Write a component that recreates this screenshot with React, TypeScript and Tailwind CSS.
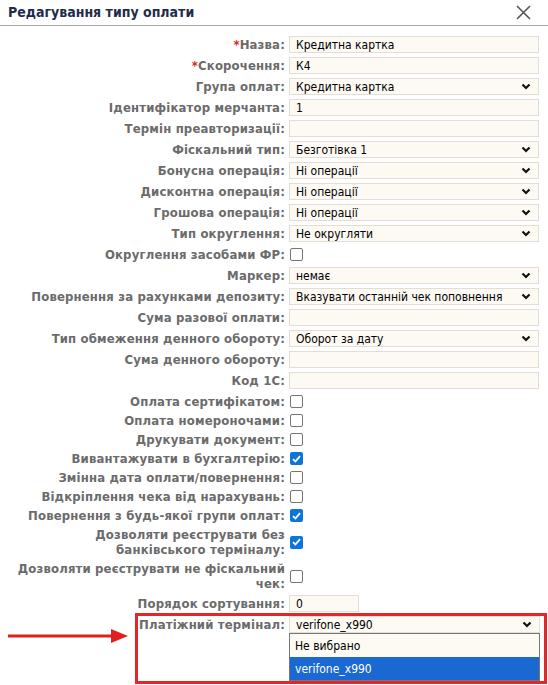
import React from "react";

const baseFont = { fontFamily: '"DejaVu Sans Condensed", "DejaVu Sans", sans-serif' };

const labelCls =
  "w-[285px] shrink-0 text-right text-[13px] font-bold leading-[15px] tracking-[0.15px] text-[#6b6b6b]";

type RowProps = {
  label: React.ReactNode;
  required?: boolean;
  children?: React.ReactNode;
};

function Row({ label, required, children }: RowProps) {
  return (
    <div className="flex h-[21px] items-center">
      <div className={labelCls}>
        {required && <span className="text-[#e0201c]">*</span>}
        {label}
      </div>
      <div className="ml-[4px] flex w-[250px] items-center">{children}</div>
    </div>
  );
}

function TextBox({ value = "", w }: { value?: string; w?: string }) {
  return (
    <div
      className={`flex h-[17px] items-center border border-[#e2ddd5] bg-[#fdf9f3] px-[6px] text-[12px] text-black ${
        w ?? "w-full"
      }`}
    >
      {value}
    </div>
  );
}

function Chevron() {
  return (
    <svg width="10" height="7" viewBox="0 0 10 7" className="shrink-0">
      <path d="M1.5 1.5 L5 5 L8.5 1.5" fill="none" stroke="#111" strokeWidth="2.2" />
    </svg>
  );
}

function SelectBox({ value }: { value: string }) {
  return (
    <div className="flex h-[17px] w-full items-center justify-between border border-[#e2ddd5] bg-[#fdf9f3] pl-[6px] pr-[7px] text-[12px] text-black">
      <span>{value}</span>
      <Chevron />
    </div>
  );
}

function Check({ on }: { on?: boolean }) {
  return on ? (
    <span className="flex h-[13px] w-[13px] items-center justify-center rounded-[2px] bg-[#0b76d8]">
      <svg width="9" height="8" viewBox="0 0 9 8">
        <path d="M1 4.2 L3.4 6.5 L8 1.2" fill="none" stroke="#fff" strokeWidth="1.8" />
      </svg>
    </span>
  ) : (
    <span className="block h-[13px] w-[13px] rounded-[2px] border border-[#767676] bg-white" />
  );
}

function CheckRow({ label, on, tall }: { label: React.ReactNode; on?: boolean; tall?: boolean }) {
  return (
    <div className={`flex items-center ${tall ? "py-[2px]" : "h-[19px]"}`}>
      <div className={labelCls}>{label}</div>
      <div className="ml-[5px] flex items-center">
        <Check on={on} />
      </div>
    </div>
  );
}

export default function App() {
  return (
    <div className="min-h-[685px] w-[548px] bg-white" style={baseFont}>
      {/* Header */}
      <div className="flex h-[26px] items-center justify-between border-b border-[#a9a9a9] pl-[8px] pr-[17px]">
        <h1 className="text-[14px] font-bold text-[#1d2d4a]">Редагування типу оплати</h1>
        <svg width="15" height="15" viewBox="0 0 15 15">
          <path d="M1 1 L14 14 M14 1 L1 14" stroke="#555" strokeWidth="1.6" />
        </svg>
      </div>

      <div className="pt-[8px]">
        <Row label="Назва:" required>
          <TextBox value="Кредитна картка" />
        </Row>
        <Row label="Скорочення:" required>
          <TextBox value="К4" />
        </Row>
        <Row label="Група оплат:">
          <SelectBox value="Кредитна картка" />
        </Row>
        <Row label="Ідентифікатор мерчанта:">
          <TextBox value="1" />
        </Row>
        <Row label="Термін преавторизації:">
          <TextBox />
        </Row>
        <Row label="Фіскальний тип:">
          <SelectBox value="Безготівка 1" />
        </Row>
        <Row label="Бонусна операція:">
          <SelectBox value="Ні операції" />
        </Row>
        <Row label="Дисконтна операція:">
          <SelectBox value="Ні операції" />
        </Row>
        <Row label="Грошова операція:">
          <SelectBox value="Ні операції" />
        </Row>
        <Row label="Тип округлення:">
          <SelectBox value="Не округляти" />
        </Row>
        <Row label="Округлення засобами ФР:">
          <span className="ml-[1px]">
            <Check />
          </span>
        </Row>
        <Row label="Маркер:">
          <SelectBox value="немає" />
        </Row>
        <Row label="Повернення за рахунками депозиту:">
          <SelectBox value="Вказувати останній чек поповнення" />
        </Row>
        <Row label="Сума разової оплати:">
          <TextBox />
        </Row>
        <Row label="Тип обмеження денного обороту:">
          <SelectBox value="Оборот за дату" />
        </Row>
        <Row label="Сума денного обороту:">
          <TextBox />
        </Row>
        <Row label="Код 1С:">
          <TextBox />
        </Row>

        <div className="pt-[1px]">
          <CheckRow label="Оплата сертифікатом:" />
          <CheckRow label="Оплата номероночами:" />
          <CheckRow label="Друкувати документ:" />
          <CheckRow label="Вивантажувати в бухгалтерію:" on />
          <CheckRow label="Змінна дата оплати/повернення:" />
          <CheckRow label="Відкріплення чека від нарахувань:" />
          <CheckRow label="Повернення з будь-якої групи оплат:" on />
          <CheckRow
            tall
            on
            label={
              <>
                Дозволяти реєструвати без
                <br />
                банківського терміналу:
              </>
            }
          />
          <CheckRow
            tall
            label={
              <>
                Дозволяти реєструвати не фіскальний
                <br />
                чек:
              </>
            }
          />
        </div>

        <div className="mt-[1px] flex h-[19px] items-center">
          <div className={labelCls}>Порядок сортування:</div>
          <div className="ml-[4px]">
            <TextBox value="0" w="w-[70px]" />
          </div>
        </div>

        {/* Highlighted terminal row */}
        <div className="flex items-start">
          <div className="flex w-[135px] shrink-0 pl-[8px] pt-[16px]">
            <svg width="120" height="14" viewBox="0 0 120 14">
              <path d="M0 7 L106 7" stroke="#e0201c" strokeWidth="3" />
              <path d="M103 0 L120 7 L103 14 Z" fill="#e0201c" />
            </svg>
          </div>
          <div className="flex w-[412px] border-[3px] border-[#e3262a]">
            <div className={`${labelCls} !w-[147px] pt-[1px]`}>Платіжний термінал:</div>
            <div className="ml-[4px] w-[251px]">
              <div className="flex h-[17px] w-full items-center justify-between border border-[#e2ddd5] bg-[#fdf9f3] pl-[6px] pr-[7px] text-[12px] text-black">
                <span>verifone_x990</span>
                <Chevron />
              </div>
              <div className="border border-[#767676] text-[12px]">
                <div className="flex h-[23px] items-center bg-[#fdf9f3] px-[5px] text-black">Не вибрано</div>
                <div className="flex h-[23px] items-center bg-[#1a68d1] px-[5px] text-white">verifone_x990</div>
              </div>
            </div>
          </div>
        </div>
      </div>
    </div>
  );
}
